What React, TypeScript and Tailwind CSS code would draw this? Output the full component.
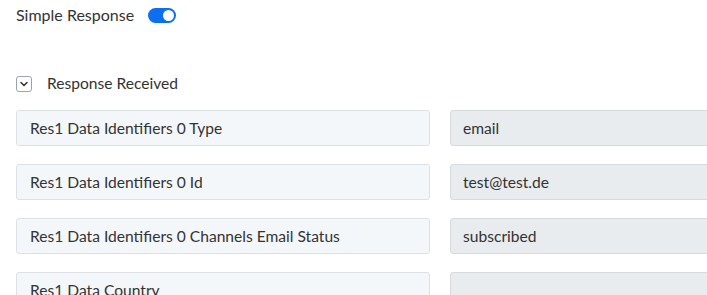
const rows = [
  { key: 'Res1 Data Identifiers 0 Type', value: 'email' },
  { key: 'Res1 Data Identifiers 0 Id', value: 'test@test.de' },
  { key: 'Res1 Data Identifiers 0 Channels Email Status', value: 'subscribed' },
  { key: 'Res1 Data Country', value: '' },
];

export default function App() {
  return (
    <div className="h-[295px] w-[707px] overflow-hidden bg-white px-4 text-[15.6px] text-[#333] font-['Lato',sans-serif]">
      <div className="flex h-[30px] items-center gap-[14px]">
        <span className="text-[16px]">Simple Response</span>
        <div className="flex h-[15px] w-[28px] items-center justify-end rounded-full bg-[#0b6ff0] px-[2px]">
          <div className="h-[11px] w-[11px] rounded-full bg-white" />
        </div>
      </div>
      <div className="mt-[42px] flex items-center gap-[15px]">
        <div className="flex h-[16px] w-[16px] items-center justify-center rounded-[3px] border border-[#9aa3ad]">
          <svg width="8" height="6" viewBox="0 0 8 6" fill="none">
            <path d="M1 1.5 L4 4.5 L7 1.5" stroke="#333" strokeWidth="1.5" strokeLinecap="round" strokeLinejoin="round" />
          </svg>
        </div>
        <span>Response Received</span>
      </div>
      <div className="mt-[15px] flex flex-col gap-[18px]">
        {rows.map((r) => (
          <div key={r.key} className="flex gap-[20px]">
            <div className="flex h-[36px] w-[414px] shrink-0 items-center rounded-[3px] border border-[#dde1e6] bg-[#f4f7fa] px-[13px]">
              {r.key}
            </div>
            <div className="flex h-[36px] w-[300px] shrink-0 items-center rounded-[3px] border border-[#d6dadf] bg-[#e9ecef] px-[12px]">
              {r.value}
            </div>
          </div>
        ))}
      </div>
    </div>
  );
}
